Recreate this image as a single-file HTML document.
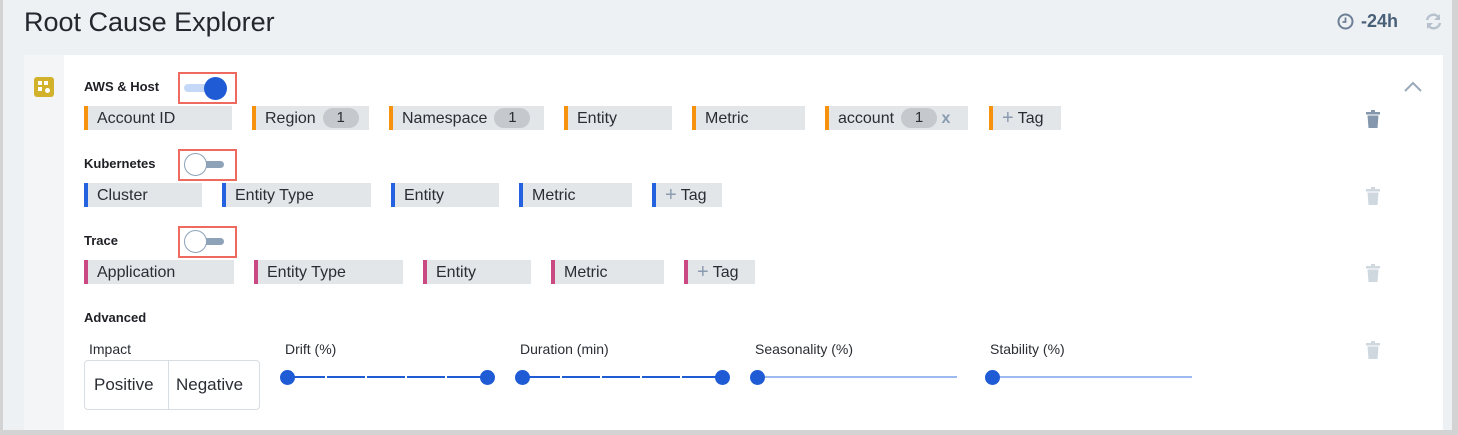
<!DOCTYPE html>
<html><head><style>
*{box-sizing:border-box;margin:0;padding:0}
body{width:1458px;height:435px;overflow:hidden;background:#edf1f4;font-family:"Liberation Sans",sans-serif;position:relative;color:#222}
.a{position:absolute}
.chip{position:absolute;height:24px;background:#e2e6e9;border-left:4px solid #f7920f;font-size:16px;line-height:25px;padding-left:9px;color:#2a2d33;white-space:nowrap}
.k{border-left-color:#2462e0}.t{border-left-color:#c94a82}
.badge{display:inline-block;background:#c5c9cd;border-radius:10px;width:36px;height:20px;line-height:20px;text-align:center;margin-left:7px;vertical-align:1px;font-size:15px;color:#2a2d33}
.plus{color:#8a9bb0;font-size:20px;margin-right:4px;vertical-align:-1px}
.lbl{position:absolute;font-size:13px;font-weight:bold;color:#1d1f24}
.box{position:absolute;width:59px;height:32px;border:2px solid #ef6a5e}
.sl{position:absolute;font-size:14px;color:#2a2d33}
.dot{position:absolute;width:15px;height:15px;border-radius:50%;background:#1e5bd4}
.trash{position:absolute;width:14px;height:18px}
</style></head><body>
<div class="a" style="left:0;top:0;width:3px;height:435px;background:#d3d3d3"></div>
<div class="a" style="right:0;top:0;width:6px;height:435px;background:#d3d3d3"></div>
<div class="a" style="left:0;top:430px;width:1458px;height:5px;background:#d3d3d3"></div>
<div class="a" style="left:24px;top:7px;font-size:27px;color:#24272d">Root Cause Explorer</div>
<svg class="a" style="left:1337px;top:13px" width="17" height="17" viewBox="0 0 17 17"><circle cx="8.5" cy="8.5" r="7" fill="none" stroke="#6c7f95" stroke-width="2"/><path d="M8.5 4.5V9H5.5" fill="none" stroke="#6c7f95" stroke-width="1.8"/></svg>
<div class="a" style="left:1361px;top:11px;font-size:18px;font-weight:bold;color:#4a6079">-24h</div>
<svg class="a" style="left:1424px;top:12px" width="19" height="19" viewBox="0 0 19 19"><path d="M3 8A6.5 6.5 0 0 1 15 6M16 11A6.5 6.5 0 0 1 4 13" fill="none" stroke="#b6c1cd" stroke-width="2.4"/><path d="M16 2V8H10Z M3 17V11H9Z" fill="#b6c1cd"/></svg>
<div class="a" style="left:24px;top:55px;width:1419px;height:375px;background:#fff"></div>
<div class="a" style="left:24px;top:55px;width:40px;height:375px;background:#f3f5f7"></div>
<div class="a" style="left:34px;top:77px;width:20px;height:20px;background:#d2b22a;border-radius:3px"></div>
<div class="a" style="left:38px;top:81px;width:4px;height:4px;background:#fff"></div>
<div class="a" style="left:44px;top:81px;width:4px;height:4px;background:#fff"></div>
<div class="a" style="left:38px;top:87px;width:4px;height:4px;background:#fff"></div>
<div class="a" style="left:45px;top:88px;width:5px;height:5px;background:#fff;border-radius:50%"></div>

<div class="lbl" style="left:84px;top:79px">AWS &amp; Host</div>
<div class="box" style="left:178px;top:72px"></div>
<div class="a" style="left:184px;top:84px;width:30px;height:8px;border-radius:4px;background:#c6d8f7"></div>
<div class="a" style="left:204px;top:77px;width:23px;height:23px;border-radius:50%;background:#1e5bd4"></div>
<div class="lbl" style="left:84px;top:156px">Kubernetes</div>
<div class="box" style="left:178px;top:149px"></div>
<div class="a" style="left:195px;top:161px;width:29px;height:7px;border-radius:4px;background:#8ea2b8"></div>
<div class="a" style="left:184px;top:153px;width:23px;height:23px;border-radius:50%;background:#fff;border:1px solid #8ea2b8"></div>
<div class="lbl" style="left:84px;top:233px">Trace</div>
<div class="box" style="left:178px;top:226px"></div>
<div class="a" style="left:195px;top:238px;width:29px;height:7px;border-radius:4px;background:#8ea2b8"></div>
<div class="a" style="left:184px;top:230px;width:23px;height:23px;border-radius:50%;background:#fff;border:1px solid #8ea2b8"></div>
<div class="lbl" style="left:84px;top:310px">Advanced</div>

<div class="chip" style="left:84px;top:106px;width:148px">Account ID</div>
<div class="chip" style="left:252px;top:106px;width:117px">Region<span class="badge">1</span></div>
<div class="chip" style="left:389px;top:106px;width:155px">Namespace<span class="badge">1</span></div>
<div class="chip" style="left:564px;top:106px;width:108px">Entity</div>
<div class="chip" style="left:692px;top:106px;width:113px">Metric</div>
<div class="chip" style="left:825px;top:106px;width:143px">account<span class="badge">1</span> <span style="color:#8a9bb0;font-size:16px;font-weight:bold">x</span></div>
<div class="chip" style="left:989px;top:106px;width:72px"><span class="plus">+</span>Tag</div>

<div class="chip k" style="left:84px;top:183px;width:118px">Cluster</div>
<div class="chip k" style="left:222px;top:183px;width:149px">Entity Type</div>
<div class="chip k" style="left:391px;top:183px;width:108px">Entity</div>
<div class="chip k" style="left:519px;top:183px;width:113px">Metric</div>
<div class="chip k" style="left:652px;top:183px;width:70px"><span class="plus">+</span>Tag</div>

<div class="chip t" style="left:84px;top:260px;width:150px">Application</div>
<div class="chip t" style="left:254px;top:260px;width:149px">Entity Type</div>
<div class="chip t" style="left:423px;top:260px;width:108px">Entity</div>
<div class="chip t" style="left:551px;top:260px;width:113px">Metric</div>
<div class="chip t" style="left:684px;top:260px;width:71px"><span class="plus">+</span>Tag</div>

<svg class="a" style="left:1403px;top:81px" width="20" height="12" viewBox="0 0 20 12"><path d="M2 10L10 2L18 10" fill="none" stroke="#9aa9ba" stroke-width="2"/></svg>
<svg class="trash" style="left:1366px;top:110px" viewBox="0 0 14 18"><rect x="0" y="2" width="14" height="2.5" fill="#8497ac"/><rect x="5" y="0" width="4" height="2" fill="#8497ac"/><path d="M1.5 5.5H12.5L11.5 18H2.5Z" fill="#8497ac"/></svg>
<svg class="trash" style="left:1366px;top:187px" viewBox="0 0 14 18"><rect x="0" y="2" width="14" height="2.5" fill="#cfd7df"/><rect x="5" y="0" width="4" height="2" fill="#cfd7df"/><path d="M1.5 5.5H12.5L11.5 18H2.5Z" fill="#cfd7df"/></svg>
<svg class="trash" style="left:1366px;top:264px" viewBox="0 0 14 18"><rect x="0" y="2" width="14" height="2.5" fill="#cfd7df"/><rect x="5" y="0" width="4" height="2" fill="#cfd7df"/><path d="M1.5 5.5H12.5L11.5 18H2.5Z" fill="#cfd7df"/></svg>
<svg class="trash" style="left:1366px;top:341px" viewBox="0 0 14 18"><rect x="0" y="2" width="14" height="2.5" fill="#cfd7df"/><rect x="5" y="0" width="4" height="2" fill="#cfd7df"/><path d="M1.5 5.5H12.5L11.5 18H2.5Z" fill="#cfd7df"/></svg>

<div class="sl" style="left:89px;top:341px">Impact</div>
<div class="a" style="left:84px;top:360px;width:176px;height:50px;border:1px solid #d8dde2;border-radius:4px"></div>
<div class="a" style="left:168px;top:360px;width:1px;height:50px;background:#d8dde2"></div>
<div class="a" style="left:94px;top:375px;font-size:17px;color:#2a2d33">Positive</div>
<div class="a" style="left:176px;top:375px;font-size:17px;color:#2a2d33">Negative</div>

<div class="sl" style="left:285px;top:341px">Drift (%)</div>
<div class="sl" style="left:520px;top:341px">Duration (min)</div>
<div class="sl" style="left:755px;top:341px">Seasonality (%)</div>
<div class="sl" style="left:990px;top:341px">Stability (%)</div>

<div class="a" style="left:287px;top:376px;width:200px;height:2px;background:repeating-linear-gradient(90deg,#1e5bd4 0 38px,#fff 38px 40px)"></div>
<div class="dot" style="left:280px;top:370px"></div><div class="dot" style="left:480px;top:370px"></div>
<div class="a" style="left:522px;top:376px;width:200px;height:2px;background:repeating-linear-gradient(90deg,#1e5bd4 0 38px,#fff 38px 40px)"></div>
<div class="dot" style="left:515px;top:370px"></div><div class="dot" style="left:715px;top:370px"></div>
<div class="a" style="left:757px;top:376px;width:200px;height:2px;background:#9dbaf0"></div>
<div class="dot" style="left:750px;top:370px"></div>
<div class="a" style="left:992px;top:376px;width:200px;height:2px;background:#9dbaf0"></div>
<div class="dot" style="left:985px;top:370px"></div>
</body></html>
